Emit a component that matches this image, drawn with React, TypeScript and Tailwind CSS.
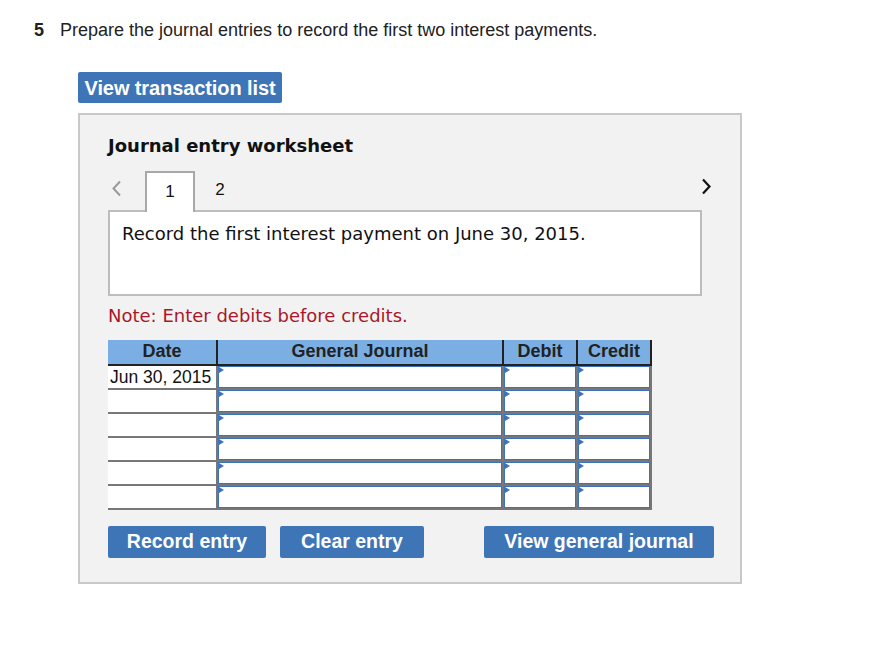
import React from 'react';

const ARIAL = '[font-family:"Liberation_Sans",Arial,sans-serif]';

function Flag() {
  return (
    <span className="absolute left-0 top-0 w-0 h-0 border-y-[3px] border-y-transparent border-l-[5px] border-l-[#3d72bd]"></span>
  );
}

function InputCell({ width }: { width: string }) {
  return (
    <div className={`${width} h-full border-r-2 border-[#777]`}>
      <div className="relative h-full border border-[#3d72bd] bg-white">
        <Flag />
      </div>
    </div>
  );
}

function BodyRow({ date }: { date?: string }) {
  return (
    <div className="flex h-[24px] border-b-2 border-[#777]">
      <div className="w-[110px] h-full border-r-2 border-[#777] bg-white pl-[2px] text-[17.5px] leading-[22px] text-[#111] whitespace-nowrap">
        {date}
      </div>
      <InputCell width="w-[286px]" />
      <InputCell width="w-[74px]" />
      <InputCell width="w-[74px]" />
    </div>
  );
}

export default function App() {
  const rows = ['Jun 30, 2015', '', '', '', '', ''];

  return (
    <div className={`w-[884px] h-[646px] bg-white ${ARIAL}`}>
      {/* Question line */}
      <div className="flex pt-[20px] pl-[34px] text-[18px] leading-[21px] text-[#222]">
        <span className="w-[26px] font-bold">5</span>
        <span>Prepare the journal entries to record the first two interest payments.</span>
      </div>

      <div className="pl-[78px] pt-[31px]">
        <button className="w-[204px] h-[31px] rounded-[2px] bg-[#3d75b7] text-white text-[20px] font-bold tracking-[-0.1px]">
          View transaction list
        </button>

        {/* Worksheet panel */}
        <div className="mt-[10px] w-[664px] border-2 border-[#c8c8c8] bg-[#f2f2f2] pl-[28px] pt-[20px] pb-[24px] [font-family:'DejaVu_Sans',Verdana,sans-serif]">
          <h2 className="text-[18px] leading-[22px] font-bold text-[#111]">Journal entry worksheet</h2>

          {/* Tabs */}
          <div className="mt-[14px] flex items-end w-[604px] relative z-10">
            <div className="w-[37px] h-[41px] flex items-center pl-[3px] pb-[6px]">
              <svg width="11" height="17" viewBox="0 0 11 17">
                <polyline points="9,1.5 2.5,8.5 9,15.5" fill="none" stroke="#9a9a9a" strokeWidth="2" />
              </svg>
            </div>
            <div className={`w-[50px] h-[41px] border-2 border-b-0 border-[#a8a8a8] bg-white flex justify-center pt-[6px] text-[17px] ${ARIAL} text-[#111]`}>
              1
            </div>
            <div className={`w-[50px] h-[41px] flex justify-center pt-[6px] text-[17px] ${ARIAL} text-[#111]`}>
              2
            </div>
            <div className="flex-1 h-[41px] flex justify-end items-center pb-[10px]">
              <svg width="11" height="17" viewBox="0 0 11 17">
                <polyline points="2,1.5 8.5,8.5 2,15.5" fill="none" stroke="#111" strokeWidth="2.2" />
              </svg>
            </div>
          </div>

          {/* Description box */}
          <div className="-mt-[2px] w-[594px] h-[86px] border-2 border-[#bdbdbd] bg-white pl-[12px] pt-[11px] text-[18px] leading-[22px] text-[#111]">
            Record the first interest payment on June 30, 2015.
          </div>

          <p className="mt-[9px] text-[18px] leading-[22px] text-[#a8182a]">Note: Enter debits before credits.</p>

          {/* Journal table */}
          <div className={`mt-[13px] w-[544px] ${ARIAL}`}>
            <div className="flex h-[26px] bg-[#7bafe4] border-b-2 border-[#222] text-[18px] font-bold text-[#222] leading-[23px]">
              <div className="w-[110px] border-r-2 border-[#222] text-center">Date</div>
              <div className="w-[286px] border-r-2 border-[#222] text-center">General Journal</div>
              <div className="w-[74px] border-r-2 border-[#222] text-center">Debit</div>
              <div className="w-[74px] border-r-2 border-[#222] text-center">Credit</div>
            </div>
            {rows.map((d, i) => (
              <BodyRow key={i} date={d} />
            ))}
          </div>

          {/* Actions */}
          <div className={`mt-[16px] flex ${ARIAL}`}>
            <button className="w-[158px] h-[32px] rounded-[2px] bg-[#3d75b7] text-white text-[19.5px] font-bold">
              Record entry
            </button>
            <button className="ml-[14px] w-[144px] h-[32px] rounded-[2px] bg-[#3d75b7] text-white text-[19.5px] font-bold">
              Clear entry
            </button>
            <button className="ml-[60px] w-[230px] h-[32px] rounded-[2px] bg-[#3d75b7] text-white text-[19.5px] font-bold">
              View general journal
            </button>
          </div>
        </div>
      </div>
    </div>
  );
}
